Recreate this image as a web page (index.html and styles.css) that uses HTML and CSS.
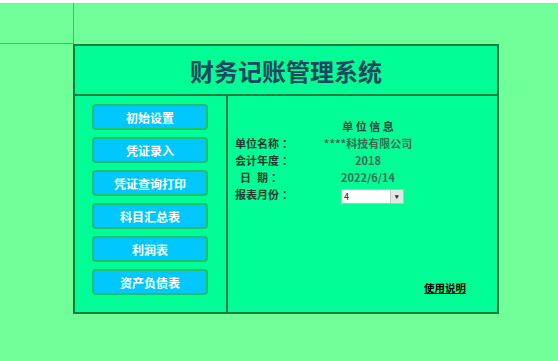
FILE: index.html
```html
<!DOCTYPE html>
<html lang="zh-CN">
<head>
<meta charset="utf-8">
<title>财务记账管理系统</title>
<link rel="stylesheet" href="styles.css">
</head>
<body>
<div class="top-strip"></div>
<div class="corner"></div>
<div class="main">
  <div class="title">财务记账管理系统</div>
  <div class="body">
    <div class="menu">
      <div class="btn">初始设置</div>
      <div class="btn">凭证录入</div>
      <div class="btn">凭证查询打印</div>
      <div class="btn">科目汇总表</div>
      <div class="btn">利润表</div>
      <div class="btn">资产负债表</div>
    </div>
    <div class="panel">
      <div class="info">
        <div class="label"></div>
        <div class="head">单 位 信 息</div>
        <div class="label">单位名称<span class="colon">：</span></div>
        <div class="value">****科技有限公司</div>
        <div class="label">会计年度<span class="colon">：</span></div>
        <div class="value">2018</div>
        <div class="label indent">日<span class="gap"></span>期<span class="colon">：</span></div>
        <div class="value">2022/6/14</div>
        <div class="label">报表月份<span class="colon">：</span></div>
        <div class="value-left">
          <div class="select"><span class="sel-text">4</span><span class="sel-arrow">▾</span></div>
        </div>
      </div>
      <div class="footer"><span class="help">使用说明</span></div>
    </div>
  </div>
</div>
</body>
</html>
```

FILE: styles.css
```css
html, body {
  margin: 0;
  padding: 0;
}
body {
  width: 558px;
  height: 361px;
  overflow: hidden;
  background: #6ffe98;
  font-family: "Noto Sans CJK SC", "Noto Sans", sans-serif;
}
.top-strip {
  height: 3px;
  background: #ffffff;
}
.corner {
  width: 74px;
  height: 41px;
  box-sizing: border-box;
  border-right: 1px solid #3fbf74;
  border-bottom: 1px solid #3fbf74;
}
.main {
  margin-left: 73px;
  width: 426px;
  height: 270px;
  box-sizing: border-box;
  border: 2px solid #167c42;
  background: #00fd96;
  display: flex;
  flex-direction: column;
}
.title {
  height: 48px;
  border-bottom: 2px solid #167c42;
  display: flex;
  align-items: center;
  justify-content: center;
  font-size: 24px;
  font-weight: bold;
  color: #1d475c;
}
.body {
  flex: 1;
  display: flex;
}
.menu {
  width: 153px;
  box-sizing: border-box;
  border-right: 2px solid #167c42;
  padding: 8px 0 0 17px;
  display: flex;
  flex-direction: column;
  gap: 7px;
}
.btn {
  width: 116px;
  height: 26px;
  box-sizing: border-box;
  border: 2px solid #1fc266;
  border-radius: 4px;
  background: #00c8fe;
  color: #ffffff;
  font-size: 12px;
  font-weight: bold;
  display: flex;
  align-items: center;
  justify-content: center;
}
.panel {
  flex: 1;
  display: flex;
  flex-direction: column;
  padding: 22px 0 0 7px;
}
.info {
  display: grid;
  grid-template-columns: 83px 100px;
  grid-auto-rows: 17px;
  font-size: 11px;
  font-weight: bold;
  line-height: 17px;
}
.head {
  text-align: center;
  color: #24433a;
}
.label {
  color: #1b3a2b;
}
.colon {
  padding-left: 3px;
}
.indent {
  padding-left: 5px;
}
.gap {
  display: inline-block;
  width: 6px;
}
.value {
  text-align: center;
  color: #3e6b52;
}
.value-left {
  display: flex;
  align-items: center;
  padding-left: 23px;
}
.select {
  width: 63px;
  height: 15px;
  box-sizing: border-box;
  border: 1px solid #b8c4bc;
  background: #ffffff;
  display: flex;
  align-items: stretch;
  margin-top: 4px;
}
.sel-text {
  flex: 1;
  font-size: 9px;
  font-weight: normal;
  line-height: 13px;
  padding-left: 2px;
  color: #222;
}
.sel-arrow {
  width: 12px;
  background: #e4e6e4;
  border-left: 1px solid #c8cac8;
  font-size: 7px;
  line-height: 13px;
  text-align: center;
  color: #333;
}
.footer {
  margin-top: auto;
  align-self: flex-end;
  padding: 0 31px 15px 0;
}
.help {
  font-size: 10.5px;
  font-weight: bold;
  color: #000;
  text-decoration: underline;
}
```
